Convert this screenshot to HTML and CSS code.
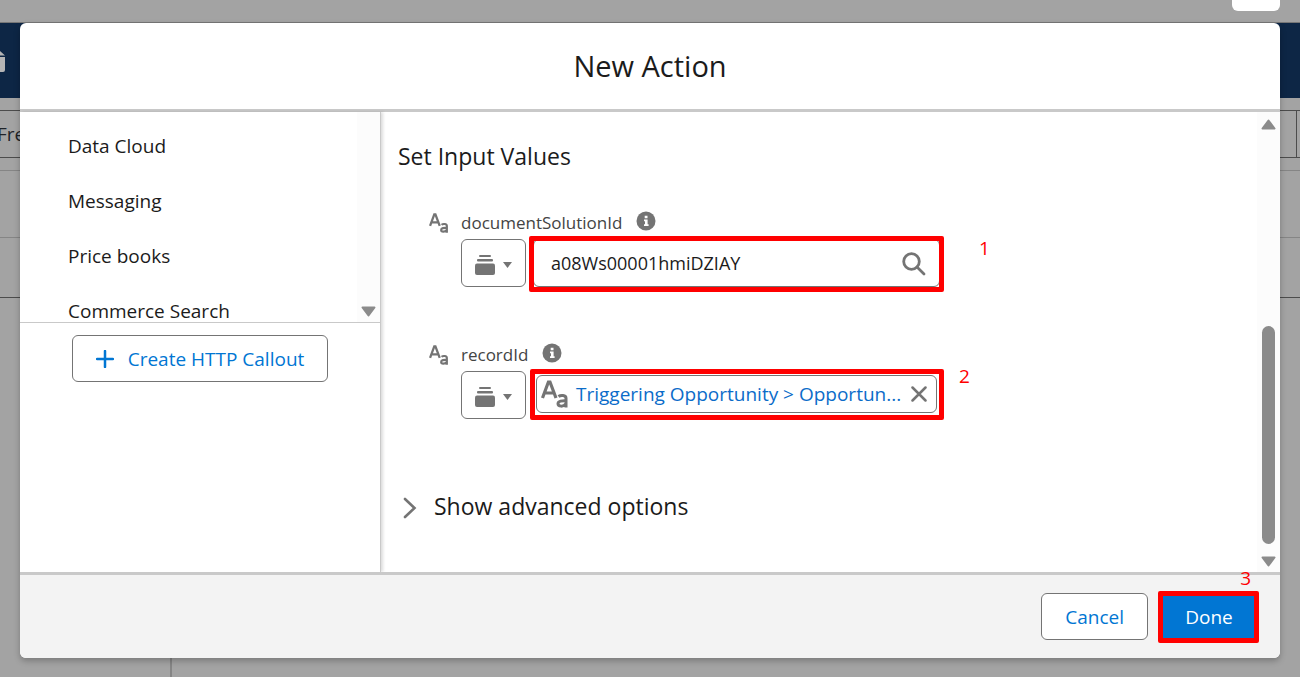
FILE: index.html
```html
<!DOCTYPE html>
<html lang="en">
<head>
<meta charset="utf-8">
<title>New Action</title>
<link rel="stylesheet" href="styles.css">
</head>
<body>
<svg class="sprite" aria-hidden="true">
  <symbol id="text-type" viewBox="0 0 28 28">
    <path d="M1.500 18 7.400 2h1.600l6 16M3.500 13h9.500" fill="none" stroke="currentColor" stroke-width="3.200"/>
    <path d="M17.500 16.500c2-1.600 7.500-1.800 7.500 1.700v9.300M25 20.800c-4-.2-8 .2-8 3s5.500 3.500 8-.3" fill="none" stroke="currentColor" stroke-width="3"/>
  </symbol>
  <symbol id="info" viewBox="0 0 20 20">
    <circle cx="10" cy="10" r="9.500" fill="currentColor"/>
    <path d="M8.700 4.800h2.800v2.400H8.700zM8 8.500h3.600v4.700h1V15H8v-1.800h1v-3H8z" fill="#fff"/>
  </symbol>
  <symbol id="stack" viewBox="0 0 20 20">
    <rect x="4" y="0" width="12" height="2" rx="1"/>
    <rect x="2" y="4" width="16" height="2.400" rx="1"/>
    <rect x="0" y="8.500" width="20" height="11.500" rx="2"/>
  </symbol>
  <symbol id="up" viewBox="0 0 15 11">
    <path d="M7.500 1.500 13.500 9.500h-12z" fill="currentColor" stroke="currentColor" stroke-width="2" stroke-linejoin="round"/>
  </symbol>
  <symbol id="down" viewBox="0 0 15 11">
    <path d="M7.500 9.500 13.500 1.500h-12z" fill="currentColor" stroke="currentColor" stroke-width="2" stroke-linejoin="round"/>
  </symbol>
</svg>

<div class="page">
  <div class="page-top"><span class="page-tab"></span></div>
  <div class="page-nav">
    <svg width="5" height="24" viewBox="0 0 5 24"><path d="M0 1 5 5.500H0zM0 7h5v13q0 2-2 2H0z" fill="#b5b5b5"/></svg>
  </div>
  <div class="page-toolbar"><span>Fre</span><i></i></div>
  <div class="page-row row-a"></div>
  <div class="page-row row-b"></div>
  <div class="page-row row-c"></div>
  <div class="page-rest"></div>
</div>

<section class="modal" role="dialog" aria-labelledby="title">
  <header class="modal-header"><h1 id="title">New Action</h1></header>
  <div class="modal-body">
    <aside class="side">
      <div class="side-list">
        <ul>
          <li>Data Cloud</li>
          <li>Messaging</li>
          <li>Price books</li>
          <li>Commerce Search</li>
        </ul>
        <div class="track track-end"><svg class="arrow"><use href="#down"/></svg></div>
      </div>
      <div class="side-action">
        <button class="btn btn-wide" type="button">
          <svg width="18" height="18" viewBox="0 0 18 18"><path d="M9 1v16M1 9h16" stroke="currentColor" stroke-width="2.500" stroke-linecap="round"/></svg>
          Create HTTP Callout
        </button>
      </div>
    </aside>
    <main class="content">
      <h2>Set Input Values</h2>
      <div class="field">
        <div class="field-label">
          <svg class="type"><use href="#text-type"/></svg>
          <label for="doc">documentSolutionId</label>
          <svg class="info"><use href="#info"/></svg>
        </div>
        <div class="field-row">
          <button class="picker" type="button" aria-label="Resource type">
            <svg class="stack"><use href="#stack"/></svg>
            <svg class="caret" viewBox="0 0 9 6"><path d="M0 0h9L4.500 6z"/></svg>
          </button>
          <div class="control marked">
            <input id="doc" type="text" value="a08Ws00001hmiDZIAY">
            <svg class="search" viewBox="0 0 24 24"><circle cx="9.500" cy="9.500" r="7.800"/><path d="m15 15 7 7"/></svg>
          </div>
          <span class="note">1</span>
        </div>
      </div>
      <div class="field field-next">
        <div class="field-label">
          <svg class="type"><use href="#text-type"/></svg>
          <span>recordId</span>
          <svg class="info"><use href="#info"/></svg>
        </div>
        <div class="field-row">
          <button class="picker" type="button" aria-label="Resource type">
            <svg class="stack"><use href="#stack"/></svg>
            <svg class="caret" viewBox="0 0 9 6"><path d="M0 0h9L4.500 6z"/></svg>
          </button>
          <div class="control control-pill marked">
            <div class="pill">
              <svg class="type-lg"><use href="#text-type"/></svg>
              <a href="#">Triggering Opportunity &gt; Opportun...</a>
              <button class="clear" type="button" aria-label="Remove">
                <svg width="16" height="16" viewBox="0 0 16 16"><path d="m1.500 1.500 13 13m0-13-13 13" stroke="currentColor" stroke-width="2.500" stroke-linecap="round"/></svg>
              </button>
            </div>
          </div>
          <span class="note note-2">2</span>
        </div>
      </div>
      <button class="advanced" type="button">
        <svg width="14" height="22" viewBox="0 0 14 22"><path d="m2 2 9.500 9L2 20" fill="none" stroke="#747474" stroke-width="2.600" stroke-linecap="round"/></svg>
        <span>Show advanced options</span>
      </button>
    </main>
    <div class="track">
      <svg class="arrow"><use href="#up"/></svg>
      <span class="thumb"></span>
      <svg class="arrow"><use href="#down"/></svg>
    </div>
  </div>
  <footer class="modal-footer">
    <button class="btn" type="button">Cancel</button>
    <div class="marked done"><button class="btn btn-brand" type="button">Done</button><span class="note note-3">3</span></div>
  </footer>
</section>
</body>
</html>
```
FILE: styles.css
```css
* { box-sizing: border-box; }
body {
  margin: 0;
  height: 100vh;
  overflow: hidden;
  font: 19px/28px "Open Sans", "Noto Sans", sans-serif;
  color: #1b1b1b;
  background: #a3a3a3;
}
h1, h2, ul { margin: 0; padding: 0; font-weight: 400; list-style: none; }
button, input { font: inherit; margin: 0; }
.sprite { position: absolute; width: 0; height: 0; }

.page { height: 100vh; display: flex; flex-direction: column; }
.page-top { height: 23px; border-bottom: 1px solid #777; display: flex; justify-content: flex-end; padding-right: 20px; }
.page-tab { width: 48px; height: 11px; background: #fff; border-radius: 0 0 6px 6px; }
.page-nav { height: 75px; background: #0d2645; padding-top: 27px; }
.page-toolbar {
  height: 48px; margin-top: 12px; padding-right: 3px;
  border: solid #4c4c4c; border-width: 1px 0;
  display: flex; justify-content: space-between;
  line-height: 46px; color: #1f2329;
}
.page-toolbar span { margin-left: -3px; }
.page-toolbar i { width: 1px; background: #4c4c4c; }
.page-row { border-bottom: 1px solid #858585; }
.row-a { height: 13px; }
.row-b { height: 67px; }
.row-c { height: 60px; border-color: #4c4c4c; }
.page-rest { flex: 1; width: 172px; border-right: 2px solid #858585; }

.modal {
  position: absolute; inset: 23px 20px 19px;
  display: flex; flex-direction: column;
  background: #fff; border-radius: 6px;
  box-shadow: 0 3px 6px rgba(0, 0, 0, .25);
}
.modal-header { height: 89px; border-bottom: 3px solid #c9c9c9; display: grid; place-items: center; }
h1 { font-size: 29px; line-height: 36px; }
.modal-body { flex: 1; min-height: 0; display: flex; }

.side { width: 361px; flex: none; border-right: 1px solid #c9c9c9; box-shadow: 2px 0 3px rgba(0, 0, 0, .14); }
.side-list { height: 211px; display: flex; justify-content: space-between; overflow: hidden; border-bottom: 1px solid #c9c9c9; }
.side-list ul { padding: 20px 0 0 48px; display: grid; grid-auto-rows: 28px; row-gap: 27px; }
.side-action { padding: 12px 52px; }

.track { width: 23px; flex: none; padding: 7px 0 5px; background: #fcfcfc; display: flex; flex-direction: column; align-items: center; }
.track-end { justify-content: flex-end; }
.arrow { width: 15px; height: 11px; color: #8b8b8b; }
.thumb { width: 13px; height: 218px; margin: auto 0 12px; border-radius: 7px; background: #8b8b8b; }

.btn {
  height: 47px; padding: 0 23px;
  display: flex; align-items: center; justify-content: center; gap: 14px;
  border: 1px solid #747474; border-radius: 6px; background: #fff; color: #0176d3;
}
.btn-wide { width: 100%; padding: 0; }
.btn-brand { width: 100%; border-color: #0176d3; background: #0176d3; color: #fff; }

.content { flex: 1; min-width: 0; padding: 28px 17px 0; }
h2 { font-size: 23px; line-height: 32px; }
.field { padding-left: 31px; margin-top: 35px; }
.field-next { margin-top: 52px; }
.field-label { display: flex; align-items: center; height: 32px; color: #444; font-size: 17px; }
.type { width: 20px; height: 20px; margin-right: 12px; color: #747474; }
.info { width: 20px; height: 20px; margin: 0 0 5px 14px; color: #747474; }
.field-row { display: flex; align-items: flex-start; padding-left: 32px; }
.picker {
  width: 65px; height: 48px; padding: 4px 1px 0 0;
  display: flex; align-items: center; justify-content: center; gap: 8px;
  border: 1px solid #747474; border-radius: 6px; background: #fff;
}
.picker svg { fill: #747474; }
.stack { width: 20px; height: 20px; }
.caret { width: 9px; height: 6px; }
.control { position: relative; width: 407px; height: 48px; margin-left: 7px; display: flex; align-items: center; }
.control input {
  width: 100%; height: 48px; padding: 0 56px 0 17px;
  border: 1px solid #747474; border-radius: 6px; background: #fff; color: #1b1b1b; outline: 0;
}
.control input { font-size: 18px; }
.search { position: absolute; right: 14px; top: 13px; width: 24px; height: 24px; fill: none; stroke: #747474; stroke-width: 2.800; stroke-linecap: round; }
.marked { position: relative; }
.marked::after {
  content: ""; position: absolute; inset: -3px -4px -5px;
  border: 5px solid #f00; border-radius: 2px; pointer-events: none;
}
.control-pill { padding: 0 3px 2px; }
.control-pill::after { inset: -2px -4px -1px -3px; }
.pill {
  flex: 1; min-width: 0; height: 38px; padding: 0 9px 0 4px;
  display: flex; align-items: center; gap: 7px;
  border: 1px solid #747474; border-radius: 6px;
}
.pill a { flex: 1; white-space: nowrap; color: #0b6cc9; text-decoration: none; }
.type-lg { width: 28px; height: 28px; flex: none; color: #747474; }
.clear { padding: 0; border: 0; background: none; color: #747474; display: flex; }
.note { margin: -5px 0 0 39px; color: #f00; }
.note-2 { margin: -9px 0 0 19px; }
.note-3 { position: absolute; right: 7px; top: -29px; margin: 0; }
.advanced {
  display: flex; align-items: center; gap: 17px; padding: 0 0 0 5px; margin-top: 71px;
  border: 0; background: none; color: #1b1b1b; font-size: 23px; line-height: 32px;
}
.advanced span { padding-bottom: 3px; }

.modal-footer {
  height: 86px; padding: 0 22px 0 0; border-top: 3px solid #c9c9c9; border-radius: 0 0 6px 6px;
  background: #f3f3f3; display: flex; justify-content: flex-end; align-items: center; gap: 12px;
}
.done { width: 98px; }
.done::after { inset: -2px -1px -3px -2px; }
```
